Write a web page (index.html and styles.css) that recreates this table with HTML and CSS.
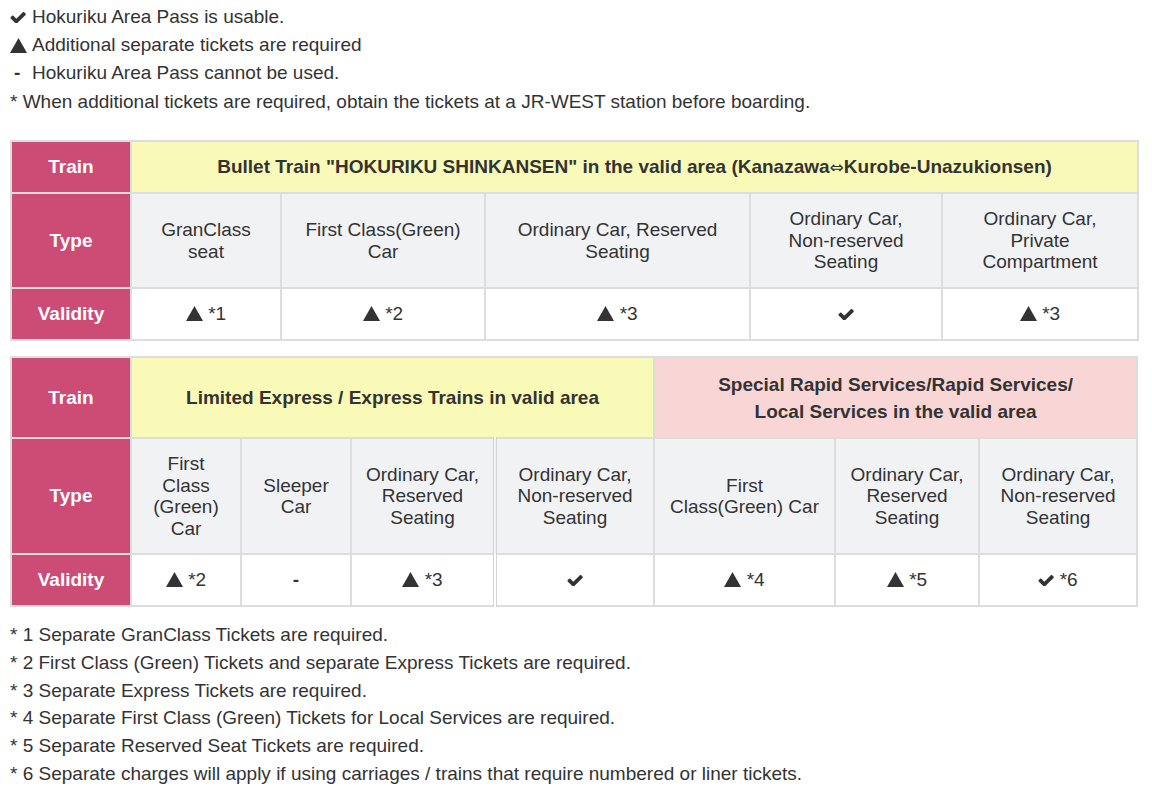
FILE: index.html
```html
<!DOCTYPE html>
<html lang="en">
<head>
<meta charset="utf-8">
<title>Hokuriku Area Pass</title>
<link rel="stylesheet" href="styles.css">
</head>
<body>
<div class="page">
  <ul class="legend">
    <li><span class="ico"><svg class="chk" viewBox="80 380 1610 1030"><path d="M1671 566q0 40-28 68l-724 724-136 136q-28 28-68 28t-68-28l-136-136-362-362q-28-28-28-68t28-68l136-136q28-28 68-28t68 28l294 295 656-657q28-28 68-28t68 28l136 136q28 28 28 68z"/></svg></span>Hokuriku Area Pass is usable.</li>
    <li><span class="ico"><svg class="tri" viewBox="0 0 16 14"><path d="M8 0L16 14H0z"/></svg></span>Additional separate tickets are required</li>
    <li><span class="ico dash">-</span>Hokuriku Area Pass cannot be used.</li>
    <li>* When additional tickets are required, obtain the tickets at a JR-WEST station before boarding.</li>
  </ul>

  <table class="pass t1">
    <colgroup>
      <col style="width:120px"><col style="width:150px"><col style="width:204px"><col style="width:265px"><col style="width:192px"><col style="width:196px">
    </colgroup>
    <tr class="r-head">
      <th class="lbl">Train</th>
      <th class="yel" colspan="5">Bullet Train "HOKURIKU SHINKANSEN" in the valid area (Kanazawa<span class="arrow">⇔</span>Kurobe-Unazukionsen)</th>
    </tr>
    <tr class="r-type1">
      <th class="lbl">Type</th>
      <td class="type">GranClass<br>seat</td>
      <td class="type">First Class(Green)<br>Car</td>
      <td class="type">Ordinary Car, Reserved<br>Seating</td>
      <td class="type">Ordinary Car,<br>Non-reserved<br>Seating</td>
      <td class="type">Ordinary Car,<br>Private<br>Compartment</td>
    </tr>
    <tr class="r-val">
      <th class="lbl">Validity</th>
      <td><svg class="tri" viewBox="0 0 16 14"><path d="M8 0L16 14H0z"/></svg> *1</td>
      <td><svg class="tri" viewBox="0 0 16 14"><path d="M8 0L16 14H0z"/></svg> *2</td>
      <td><svg class="tri" viewBox="0 0 16 14"><path d="M8 0L16 14H0z"/></svg> *3</td>
      <td><svg class="chk" viewBox="80 380 1610 1030"><path d="M1671 566q0 40-28 68l-724 724-136 136q-28 28-68 28t-68-28l-136-136-362-362q-28-28-28-68t28-68l136-136q28-28 68-28t68 28l294 295 656-657q28-28 68-28t68 28l136 136q28 28 28 68z"/></svg></td>
      <td><svg class="tri" viewBox="0 0 16 14"><path d="M8 0L16 14H0z"/></svg> *3</td>
    </tr>
  </table>

  <table class="pass t2">
    <colgroup>
      <col style="width:120px"><col style="width:110px"><col style="width:110px"><col style="width:144px"><col style="width:159px"><col style="width:181px"><col style="width:144px"><col style="width:158px">
    </colgroup>
    <tr class="r-head2">
      <th class="lbl">Train</th>
      <th class="yel" colspan="4">Limited Express / Express Trains in valid area</th>
      <th class="pnk" colspan="3">Special Rapid Services/Rapid Services/<br>Local Services in the valid area</th>
    </tr>
    <tr class="r-type2">
      <th class="lbl">Type</th>
      <td class="type">First<br>Class<br>(Green)<br>Car</td>
      <td class="type">Sleeper<br>Car</td>
      <td class="type">Ordinary Car,<br>Reserved<br>Seating</td>
      <td class="type split">Ordinary Car,<br>Non-reserved<br>Seating</td>
      <td class="type">First<br>Class(Green) Car</td>
      <td class="type">Ordinary Car,<br>Reserved<br>Seating</td>
      <td class="type">Ordinary Car,<br>Non-reserved<br>Seating</td>
    </tr>
    <tr class="r-val">
      <th class="lbl">Validity</th>
      <td><svg class="tri" viewBox="0 0 16 14"><path d="M8 0L16 14H0z"/></svg> *2</td>
      <td class="dashcell">-</td>
      <td><svg class="tri" viewBox="0 0 16 14"><path d="M8 0L16 14H0z"/></svg> *3</td>
      <td class="split"><svg class="chk" viewBox="80 380 1610 1030"><path d="M1671 566q0 40-28 68l-724 724-136 136q-28 28-68 28t-68-28l-136-136-362-362q-28-28-28-68t28-68l136-136q28-28 68-28t68 28l294 295 656-657q28-28 68-28t68 28l136 136q28 28 28 68z"/></svg></td>
      <td><svg class="tri" viewBox="0 0 16 14"><path d="M8 0L16 14H0z"/></svg> *4</td>
      <td><svg class="tri" viewBox="0 0 16 14"><path d="M8 0L16 14H0z"/></svg> *5</td>
      <td><svg class="chk" viewBox="80 380 1610 1030"><path d="M1671 566q0 40-28 68l-724 724-136 136q-28 28-68 28t-68-28l-136-136-362-362q-28-28-28-68t28-68l136-136q28-28 68-28t68 28l294 295 656-657q28-28 68-28t68 28l136 136q28 28 28 68z"/></svg> *6</td>
    </tr>
  </table>

  <ul class="notes">
    <li>* 1 Separate GranClass Tickets are required.</li>
    <li>* 2 First Class (Green) Tickets and separate Express Tickets are required.</li>
    <li>* 3 Separate Express Tickets are required.</li>
    <li>* 4 Separate First Class (Green) Tickets for Local Services are required.</li>
    <li>* 5 Separate Reserved Seat Tickets are required.</li>
    <li>* 6 Separate charges will apply if using carriages / trains that require numbered or liner tickets.</li>
  </ul>
</div>
</body>
</html>
```

FILE: styles.css
```css
html, body {
  margin: 0;
  padding: 0;
  background: #fff;
}
body {
  font-family: "Liberation Sans", Arial, sans-serif;
  font-size: 19px;
  color: #333;
}
.page {
  padding: 3px 10px 0 10px;
}
.legend, .notes {
  list-style: none;
  margin: 0;
  padding: 0;
  line-height: 28px;
}
.legend li, .notes li {
  display: flex;
  align-items: center;
}
.legend li { height: 28px; }
.legend li:last-child { height: 29px; }
.ico {
  display: inline-flex;
  width: 22px;
  align-items: center;
}
.ico .chk { width: 16px; height: 11px; }
.ico .tri { width: 17px; height: 15px; }
.ico.dash {
  font-weight: bold;
  padding-left: 4px;
  width: 18px;
}
.chk, .tri { fill: #333; }
.chk { width: 16px; height: 11px; vertical-align: 0; }
.tri { width: 17px; height: 15px; vertical-align: -1px; }
.arrow {
  font-family: "DejaVu Sans", sans-serif;
  font-weight: normal;
  font-size: 17px;
}

.pass {
  border-collapse: collapse;
  table-layout: fixed;
  width: 1126px;
  margin-top: 24px;
  text-align: center;
}
.pass.t2 { margin-top: 15px; }
.pass th, .pass td {
  border: 2px solid #dddddd;
  padding: 0 4px;
  vertical-align: middle;
  line-height: 21.5px;
}
.pass .lbl {
  background: #cd4c76;
  color: #fff;
  font-weight: bold;
  padding: 0;
}
.pass .yel {
  background: #fafab8;
  font-weight: bold;
  color: #333;
}
.pass .pnk {
  background: #f8d6d6;
  font-weight: bold;
  color: #333;
  line-height: 27px;
}
.pass td.type {
  background: #f1f2f4;
}
.pass td { background: #fff; }
.pass td.split { border-left: 4px double #d4d4d4; }
.dashcell { font-weight: bold; }

.r-head { height: 52px; }
.r-type1 { height: 95px; }
.r-val { height: 52px; }
.r-head2 { height: 81px; }
.r-type2 { height: 116px; }

.notes {
  margin-top: 14px;
  line-height: 27.8px;
}
```
